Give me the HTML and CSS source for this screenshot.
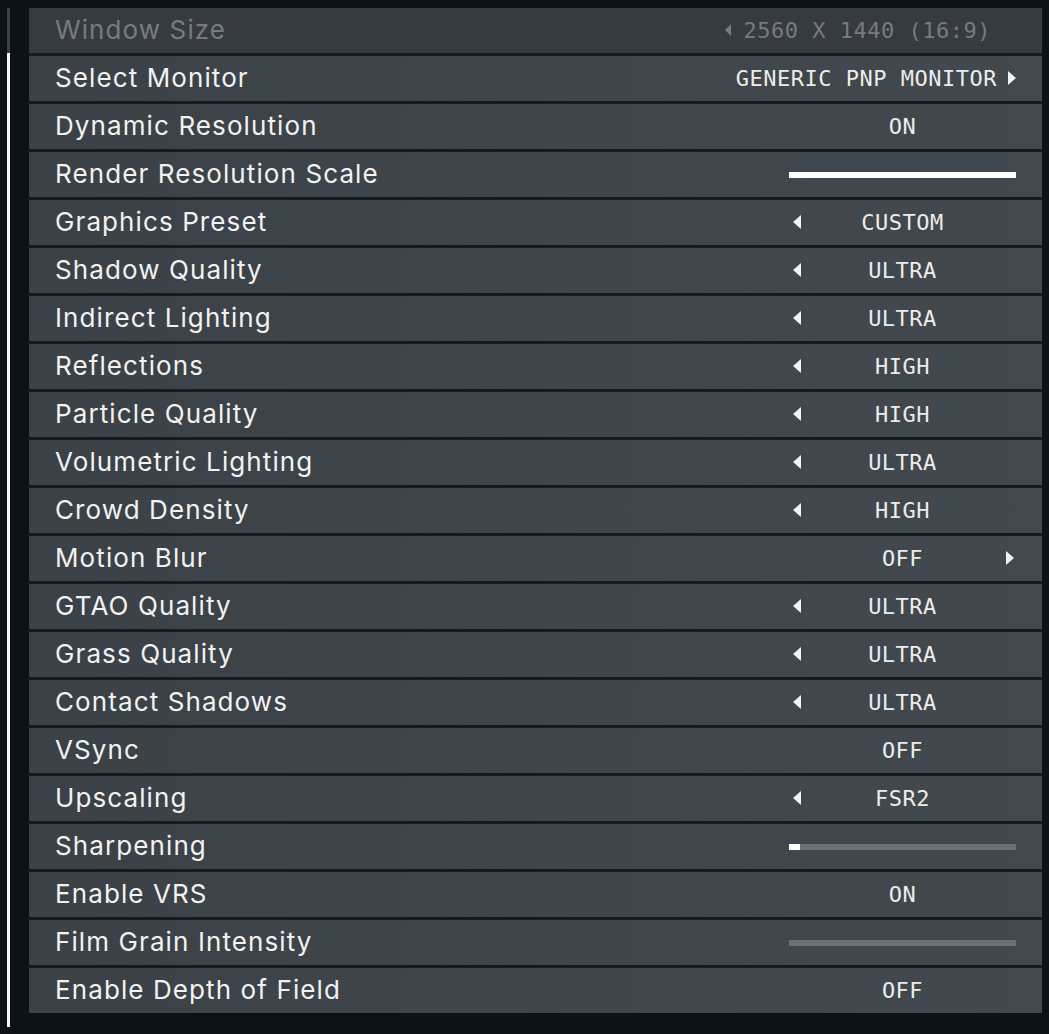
FILE: index.html
```html
<!DOCTYPE html>
<html lang="en">
<head>
    <meta charset="UTF-8">
    <meta name="viewport" content="width=device-width, initial-scale=1.0">
    <title>Display Settings</title>
    <link rel="stylesheet" href="styles.css">
</head>
<body>
    <div class="screen">
        <!-- scrollbar -->
        <div class="scrollbar">
            <div class="thumb"></div>
        </div>

        <!-- settings list -->
        <ul class="settings">
            <li class="row disabled">
                <span class="label">Window Size</span>
                <span class="value wide"><i class="arrow left"></i>2560 X 1440 (16:9)</span>
            </li>
            <li class="row">
                <span class="label">Select Monitor</span>
                <span class="value wide">GENERIC PNP MONITOR<i class="arrow right"></i></span>
            </li>
            <li class="row">
                <span class="label">Dynamic Resolution</span>
                <span class="value"><i></i><b>ON</b><i></i></span>
            </li>
            <li class="row">
                <span class="label">Render Resolution Scale</span>
                <span class="slider"><span class="fill" style="width: 100%"></span></span>
            </li>
            <li class="row">
                <span class="label">Graphics Preset</span>
                <span class="value"><i class="arrow left"></i><b>CUSTOM</b><i></i></span>
            </li>
            <li class="row">
                <span class="label">Shadow Quality</span>
                <span class="value"><i class="arrow left"></i><b>ULTRA</b><i></i></span>
            </li>
            <li class="row">
                <span class="label">Indirect Lighting</span>
                <span class="value"><i class="arrow left"></i><b>ULTRA</b><i></i></span>
            </li>
            <li class="row">
                <span class="label">Reflections</span>
                <span class="value"><i class="arrow left"></i><b>HIGH</b><i></i></span>
            </li>
            <li class="row">
                <span class="label">Particle Quality</span>
                <span class="value"><i class="arrow left"></i><b>HIGH</b><i></i></span>
            </li>
            <li class="row">
                <span class="label">Volumetric Lighting</span>
                <span class="value"><i class="arrow left"></i><b>ULTRA</b><i></i></span>
            </li>
            <li class="row">
                <span class="label">Crowd Density</span>
                <span class="value"><i class="arrow left"></i><b>HIGH</b><i></i></span>
            </li>
            <li class="row">
                <span class="label">Motion Blur</span>
                <span class="value"><i></i><b>OFF</b><i class="arrow right"></i></span>
            </li>
            <li class="row">
                <span class="label">GTAO Quality</span>
                <span class="value"><i class="arrow left"></i><b>ULTRA</b><i></i></span>
            </li>
            <li class="row">
                <span class="label">Grass Quality</span>
                <span class="value"><i class="arrow left"></i><b>ULTRA</b><i></i></span>
            </li>
            <li class="row">
                <span class="label">Contact Shadows</span>
                <span class="value"><i class="arrow left"></i><b>ULTRA</b><i></i></span>
            </li>
            <li class="row">
                <span class="label">VSync</span>
                <span class="value"><i></i><b>OFF</b><i></i></span>
            </li>
            <li class="row">
                <span class="label">Upscaling</span>
                <span class="value"><i class="arrow left"></i><b>FSR2</b><i></i></span>
            </li>
            <li class="row">
                <span class="label">Sharpening</span>
                <span class="slider"><span class="fill" style="width: 5%"></span></span>
            </li>
            <li class="row">
                <span class="label">Enable VRS</span>
                <span class="value"><i></i><b>ON</b><i></i></span>
            </li>
            <li class="row">
                <span class="label">Film Grain Intensity</span>
                <span class="slider"><span class="fill" style="width: 0%"></span></span>
            </li>
            <li class="row">
                <span class="label">Enable Depth of Field</span>
                <span class="value"><i></i><b>OFF</b><i></i></span>
            </li>
        </ul>
    </div>
</body>
</html>
```

FILE: styles.css
```css
body {
    margin: 0;
    background: #0c1217;
    font-family: Inter, "DejaVu Sans", sans-serif;
    color: #f2f2f2;
}

.screen {
    display: flex;
    align-items: flex-start;
    gap: 19px;
    padding: 8px 0 0 7px;
    height: 1026px;
    overflow: hidden;
}

.scrollbar {
    width: 3px;
    height: 1019px;
    background: #3a4046;
    display: flex;
    flex-direction: column;
    justify-content: flex-end;
}

.thumb {
    height: 974px;
    background: #f4f4f4;
}

.settings {
    list-style: none;
    margin: 0;
    padding: 0;
    width: 1013px;
    display: flex;
    flex-direction: column;
    gap: 3px;
    background: #141a1f;
}

.row {
    height: 45px;
    display: flex;
    align-items: center;
    justify-content: space-between;
    padding: 0 26px 0 26px;
    background: linear-gradient(100deg, #3a4147 0%, #3f464c 60%, #41484e 100%);
    box-sizing: border-box;
}

.label {
    font-size: 26px;
    letter-spacing: 1.1px;
    padding-bottom: 2px;
}

.value {
    width: 227px;
    display: grid;
    grid-template-columns: 12px 1fr 12px;
    align-items: center;
    font-family: "DejaVu Sans Mono", monospace;
    font-size: 22px;
    letter-spacing: 0.5px;
    color: #ececec;
    padding-bottom: 1px;
}

.value b {
    font-weight: normal;
    text-align: center;
}

.value.wide {
    width: auto;
    display: flex;
    gap: 9px;
}

.arrow {
    display: block;
    width: 0;
    height: 0;
    border-top: 7px solid transparent;
    border-bottom: 7px solid transparent;
}

.arrow.left {
    border-right: 8px solid #f2f2f2;
    margin-left: 4px;
}

.arrow.right {
    border-left: 8px solid #f2f2f2;
    margin-left: 2px;
}

.disabled {
    background: #353b40;
}

.disabled .label,
.disabled .value {
    color: #767b80;
}

.disabled .arrow.left {
    border-right-color: #767b80;
    border-top-width: 6px;
    border-bottom-width: 6px;
    border-right-width: 6px;
}

.disabled .value.wide {
    margin-right: 25px;
    gap: 13px;
}

.slider {
    width: 227px;
    height: 6px;
    background: #6b7176;
    display: flex;
}

.fill {
    background: #ffffff;
}
```
